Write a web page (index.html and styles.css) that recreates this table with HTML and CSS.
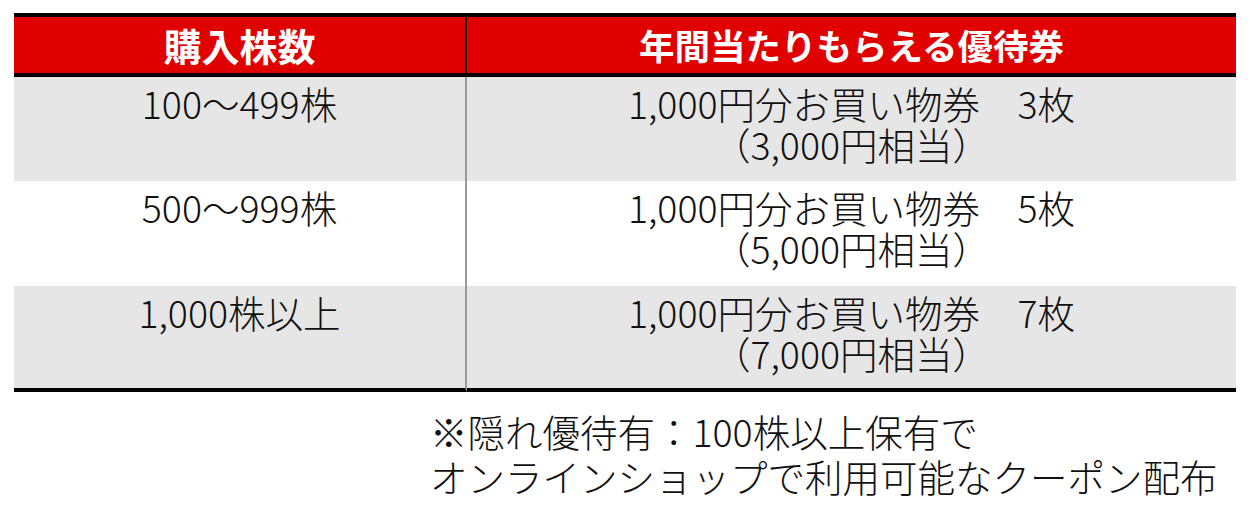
FILE: index.html
```html
<!DOCTYPE html>
<html lang="ja">
<head>
<meta charset="utf-8">
<link rel="stylesheet" href="styles.css">
</head>
<body>
<div class="page">
  <table class="benefits">
    <thead>
      <tr>
        <th class="col-shares">購入株数</th>
        <th class="col-coupons">年間当たりもらえる優待券</th>
      </tr>
    </thead>
    <tbody>
      <tr class="row-gray r1">
        <td class="col-shares">100～499株</td>
        <td class="col-coupons">1,000円分お買い物券　3枚<br>（3,000円相当）</td>
      </tr>
      <tr class="row-white r2">
        <td class="col-shares">500～999株</td>
        <td class="col-coupons">1,000円分お買い物券　5枚<br>（5,000円相当）</td>
      </tr>
      <tr class="row-gray r3">
        <td class="col-shares">1,000株以上</td>
        <td class="col-coupons">1,000円分お買い物券　7枚<br>（7,000円相当）</td>
      </tr>
    </tbody>
  </table>
  <p class="note">※隠れ優待有：100株以上保有で<br>オンラインショップで利用可能なクーポン配布</p>
</div>
</body>
</html>
```

FILE: styles.css
```css
html, body {
  margin: 0;
  padding: 0;
  background: #ffffff;
}

body {
  font-family: "Noto Sans CJK JP", "Noto Sans", sans-serif;
  color: #111111;
}

.page {
  padding: 13px 0 0 14px;
}

.benefits {
  width: 1222px;
  border-collapse: separate;
  border-spacing: 0;
  table-layout: fixed;
}

.benefits th,
.benefits td {
  padding: 0;
  text-align: center;
  box-sizing: border-box;
}

.benefits th {
  background: #e00000;
  color: #ffffff;
  font-weight: 700;
  font-size: 35.5px;
  line-height: 52px;
  height: 64px;
  border-top: 4px solid #000000;
  border-bottom: 4px solid #000000;
}

.benefits th.col-shares {
  width: 453px;
  font-size: 38px;
  border-right: 2px solid #000000;
}

.benefits td {
  vertical-align: top;
  font-size: 37.5px;
  font-weight: 300;
  line-height: 41px;
  padding-top: 5px;
}

.benefits td.col-shares {
  border-right: 2px solid #9a9a9a;
}

.row-gray td {
  background: #e6e6e6;
}

.row-white td {
  background: #ffffff;
}

.r1 td { height: 104px; }
.r2 td { height: 105px; }
.r3 td {
  height: 106px;
  border-bottom: 4px solid #000000;
}

.note {
  margin: 16px 0 0 416px;
  font-size: 37.5px;
  line-height: 45px;
  font-weight: 300;
  color: #111111;
}
```
